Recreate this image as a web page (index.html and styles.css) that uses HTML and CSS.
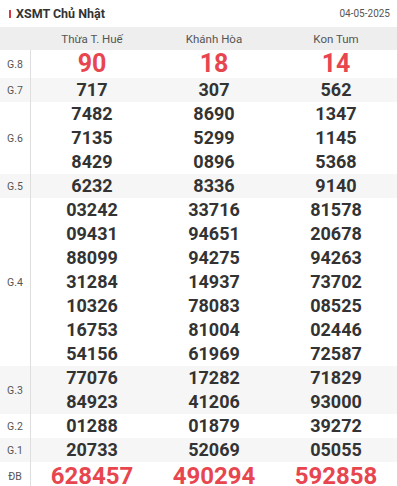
FILE: index.html
```html
<!DOCTYPE html>
<html lang="vi">
<head>
<meta charset="utf-8">
<link rel="stylesheet" href="styles.css">
</head>
<body>
<div class="box">
  <div class="title">
    <div class="title-left"><span class="bar"></span><span class="title-text">XSMT Chủ Nhật</span></div>
    <span class="date">04-05-2025</span>
  </div>
  <div class="head">
    <div class="lab"></div>
    <div class="cell">Thừa T. Huế</div>
    <div class="cell">Khánh Hòa</div>
    <div class="cell">Kon Tum</div>
  </div>
  <div class="row g8">
    <div class="lab">G.8</div>
    <div class="cell red big">90</div>
    <div class="cell red big">18</div>
    <div class="cell red big">14</div>
  </div>
  <div class="row alt">
    <div class="lab">G.7</div>
    <div class="cell">717</div>
    <div class="cell">307</div>
    <div class="cell">562</div>
  </div>
  <div class="row">
    <div class="lab">G.6</div>
    <div class="cell"><span>7482</span><span>7135</span><span>8429</span></div>
    <div class="cell"><span>8690</span><span>5299</span><span>0896</span></div>
    <div class="cell"><span>1347</span><span>1145</span><span>5368</span></div>
  </div>
  <div class="row alt">
    <div class="lab">G.5</div>
    <div class="cell">6232</div>
    <div class="cell">8336</div>
    <div class="cell">9140</div>
  </div>
  <div class="row">
    <div class="lab">G.4</div>
    <div class="cell"><span>03242</span><span>09431</span><span>88099</span><span>31284</span><span>10326</span><span>16753</span><span>54156</span></div>
    <div class="cell"><span>33716</span><span>94651</span><span>94275</span><span>14937</span><span>78083</span><span>81004</span><span>61969</span></div>
    <div class="cell"><span>81578</span><span>20678</span><span>94263</span><span>73702</span><span>08525</span><span>02446</span><span>72587</span></div>
  </div>
  <div class="row alt">
    <div class="lab">G.3</div>
    <div class="cell"><span>77076</span><span>84923</span></div>
    <div class="cell"><span>17282</span><span>41206</span></div>
    <div class="cell"><span>71829</span><span>93000</span></div>
  </div>
  <div class="row">
    <div class="lab">G.2</div>
    <div class="cell">01288</div>
    <div class="cell">01879</div>
    <div class="cell">39272</div>
  </div>
  <div class="row alt">
    <div class="lab">G.1</div>
    <div class="cell">20733</div>
    <div class="cell">52069</div>
    <div class="cell">05055</div>
  </div>
  <div class="row db">
    <div class="lab">ĐB</div>
    <div class="cell red big">628457</div>
    <div class="cell red big">490294</div>
    <div class="cell red big">592858</div>
  </div>
</div>
</body>
</html>
```
FILE: styles.css
```css
* { box-sizing: border-box; }
html, body { margin: 0; padding: 0; background: #fff; }
body { font-family: Roboto, "Liberation Sans", Arial, sans-serif; color: #333; }
.box { width: 397px; }
.title {
  height: 27px;
  display: flex;
  align-items: center;
  justify-content: space-between;
  padding: 0 7px 0 9px;
}
.title-left { display: flex; align-items: center; gap: 5px; }
.bar { width: 2px; height: 8px; background: #d23a44; }
.title-text { font-size: 12.5px; font-weight: 700; color: #333; }
.date { font-size: 10px; color: #555; }
.head {
  display: flex;
  height: 23px;
  background: #eeeeee;
  align-items: center;
  font-size: 11.5px;
  color: #555;
}
.head .lab { border-right: none; }
.row { display: flex; }
.row.alt { background: #f6f6f6; }
.lab {
  width: 31px;
  flex: none;
  border-right: 1px solid #dedede;
  display: flex;
  align-items: center;
  justify-content: center;
  font-size: 10.5px;
  color: #555;
}
.cell {
  flex: 1 1 0;
  display: flex;
  flex-direction: column;
  align-items: center;
  justify-content: center;
}
.row .cell {
  font-size: 18px;
  font-weight: 700;
  line-height: 24px;
  color: #333;
}
.row .cell span { display: block; }
.row.g8 .cell, .row.db .cell { line-height: 28px; }
.row .cell.big { font-size: 25px; }
.row.db .cell.big { font-size: 24px; }
.row .cell.red { color: #e8464f; }
```
